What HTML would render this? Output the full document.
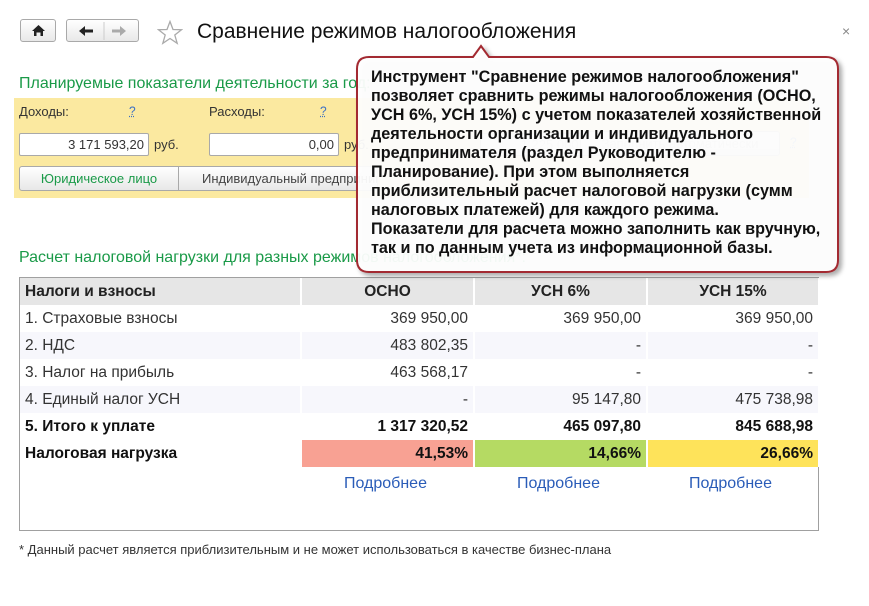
<!DOCTYPE html>
<html><head><meta charset="utf-8"><style>
*{margin:0;padding:0;box-sizing:border-box}
body{width:869px;height:606px;background:#fff;position:relative;overflow:hidden;font-family:"Liberation Sans",Arial,sans-serif;color:#333}
.a{position:absolute;white-space:nowrap}
.btn{position:absolute;border:1px solid #a9a9a9;border-radius:3px;background:linear-gradient(#fff,#e8e8e8);white-space:nowrap;overflow:hidden}
.green{color:#1a9a48}
.inp{position:absolute;background:#fff;border:1px solid #a9a9a9;border-radius:2px;height:23px;text-align:right;padding-right:4px;font-size:13px;line-height:21px;color:#333}
.q{color:#3a6fc4;font-size:12px;text-decoration:underline dotted}
table{position:absolute;left:20px;top:278px;border-collapse:collapse;font-size:15.5px}
td{height:27px;padding:0 5px;border-right:2px solid #fff;white-space:nowrap}
tr.h td{background:#e6e6e6;font-weight:bold;text-align:center;font-size:15.5px;color:#222}
tr.alt td{background:#f7f7fc}
td.n{text-align:right}
tr.b td{font-weight:bold;color:#111}
.lnk{position:absolute;top:475px;color:#2a5cb8;font-size:16px}
</style></head><body>
<div class="btn" style="left:20px;top:19px;width:36px;height:23px"><svg width="36" height="22" viewBox="0 0 36 22"><path d="M11 11 L17.5 5 L24 11 H22 V16 H19.5 V12.5 H15.5 V16 H13 V11Z" fill="#222"/></svg></div>
<div class="btn" style="left:66px;top:19px;width:73px;height:23px"><svg width="73" height="22" viewBox="0 0 73 22"><path d="M12 11 L18 6 V9.5 H26 V12.5 H18 V16Z" fill="#222"/><line x1="37" y1="2" x2="37" y2="20" stroke="#ccc"/><path d="M59 11 L53 6 V9.5 H45 V12.5 H53 V16Z" fill="#aaa"/></svg></div>
<svg class="a" style="left:157px;top:20px" width="26" height="25" viewBox="0 0 26 25"><path d="M13 1.5 L16 9.5 L24.5 9.7 L17.8 15 L20.2 23.3 L13 18.5 L5.8 23.3 L8.2 15 L1.5 9.7 L10 9.5Z" fill="none" stroke="#aaa" stroke-width="1.3"/></svg>
<div class="a" style="left:197px;top:20px;font-size:21px;color:#111">Сравнение режимов налогообложения</div>
<div class="a" style="left:842px;top:23px;font-size:14px;color:#888">×</div>

<div class="a green" style="left:19px;top:75px;font-size:16px">Планируемые показатели деятельности за год:</div>
<div class="a" style="left:14px;top:98px;width:795px;height:100px;background:#fbe9a0"></div>
<div class="a" style="left:19px;top:104px;font-size:13px">Доходы:</div>
<div class="a q" style="left:129px;top:104px">?</div>
<div class="a" style="left:209px;top:104px;font-size:13px">Расходы:</div>
<div class="a q" style="left:320px;top:104px">?</div>
<div class="inp" style="left:19px;top:133px;width:130px">3 171 593,20</div>
<div class="a" style="left:154px;top:137px;font-size:13px">руб.</div>
<div class="inp" style="left:209px;top:133px;width:130px">0,00</div>
<div class="a" style="left:344px;top:137px;font-size:13px">руб.</div>
<div class="inp" style="left:480px;top:133px;width:150px;color:#bbb">1 225 000,00 руб.</div>
<div class="btn" style="left:580px;top:131px;width:200px;height:25px;font-size:13px;color:#bbb;text-align:center;line-height:23px">Заполнить автоматически</div>
<div class="a q" style="left:790px;top:135px">?</div>
<div class="btn" style="left:19px;top:166px;width:160px;height:25px;border-radius:3px 0 0 3px;font-size:13px;text-align:center;line-height:23px;color:#1a9a48">Юридическое лицо</div>
<div class="btn" style="left:178px;top:166px;width:200px;height:25px;border-radius:0 3px 3px 0;font-size:13px;padding-left:23px;line-height:23px;color:#444">Индивидуальный предприниматель</div>

<div class="a green" style="left:19px;top:249px;font-size:16px">Расчет налоговой нагрузки для разных режимов налогообложения*:</div>
<div class="a" style="left:19px;top:277px;width:800px;height:254px;border:1px solid #a0a0a0"></div>
<table>
<tr class="h"><td style="width:281px;text-align:left">Налоги и взносы</td><td style="width:173px">ОСНО</td><td style="width:173px">УСН 6%</td><td style="width:172px">УСН 15%</td></tr>
<tr><td>1. Страховые взносы</td><td class="n">369 950,00</td><td class="n">369 950,00</td><td class="n">369 950,00</td></tr>
<tr class="alt"><td>2. НДС</td><td class="n">483 802,35</td><td class="n">-</td><td class="n">-</td></tr>
<tr><td>3. Налог на прибыль</td><td class="n">463 568,17</td><td class="n">-</td><td class="n">-</td></tr>
<tr class="alt"><td>4. Единый налог УСН</td><td class="n">-</td><td class="n">95 147,80</td><td class="n">475 738,98</td></tr>
<tr class="b"><td>5. Итого к уплате</td><td class="n">1 317 320,52</td><td class="n">465 097,80</td><td class="n">845 688,98</td></tr>
<tr class="b"><td>Налоговая нагрузка</td><td class="n" style="background:#f8a193">41,53%</td><td class="n" style="background:#b5da63">14,66%</td><td class="n" style="background:#fee35a">26,66%</td></tr>
</table>
<div class="lnk" style="left:344px">Подробнее</div>
<div class="lnk" style="left:517px">Подробнее</div>
<div class="lnk" style="left:689px">Подробнее</div>
<div class="a" style="left:19px;top:542px;font-size:13px;color:#333">* Данный расчет является приблизительным и не может использоваться в качестве бизнес-плана</div>

<svg class="a" style="left:350px;top:40px" width="500" height="245" viewBox="0 0 500 245">
<defs><filter id="s" x="-5%" y="-5%" width="115%" height="120%"><feDropShadow dx="3" dy="3" stdDeviation="2.5" flood-color="#000" flood-opacity="0.35"/></filter></defs>
<path d="M19 17 H123 L131 6 L139 17 H476 Q488 17 488 29 V220 Q488 232 476 232 H19 Q7 232 7 220 V29 Q7 17 19 17Z" fill="rgba(255,255,255,0.93)" stroke="#a32a30" stroke-width="2" filter="url(#s)"/>
</svg>
<div class="a" style="left:371px;top:68px;font-size:16.2px;font-weight:bold;color:#111;line-height:19px;white-space:nowrap">Инструмент "Сравнение режимов налогообложения"<br>позволяет сравнить режимы налогообложения (ОСНО,<br>УСН 6%, УСН 15%) с учетом показателей хозяйственной<br>деятельности организации и индивидуального<br>предпринимателя (раздел Руководителю -<br>Планирование). При этом выполняется<br>приблизительный расчет налоговой нагрузки (сумм<br>налоговых платежей) для каждого режима.<br>Показатели для расчета можно заполнить как вручную,<br>так и по данным учета из информационной базы.</div>
</body></html>
